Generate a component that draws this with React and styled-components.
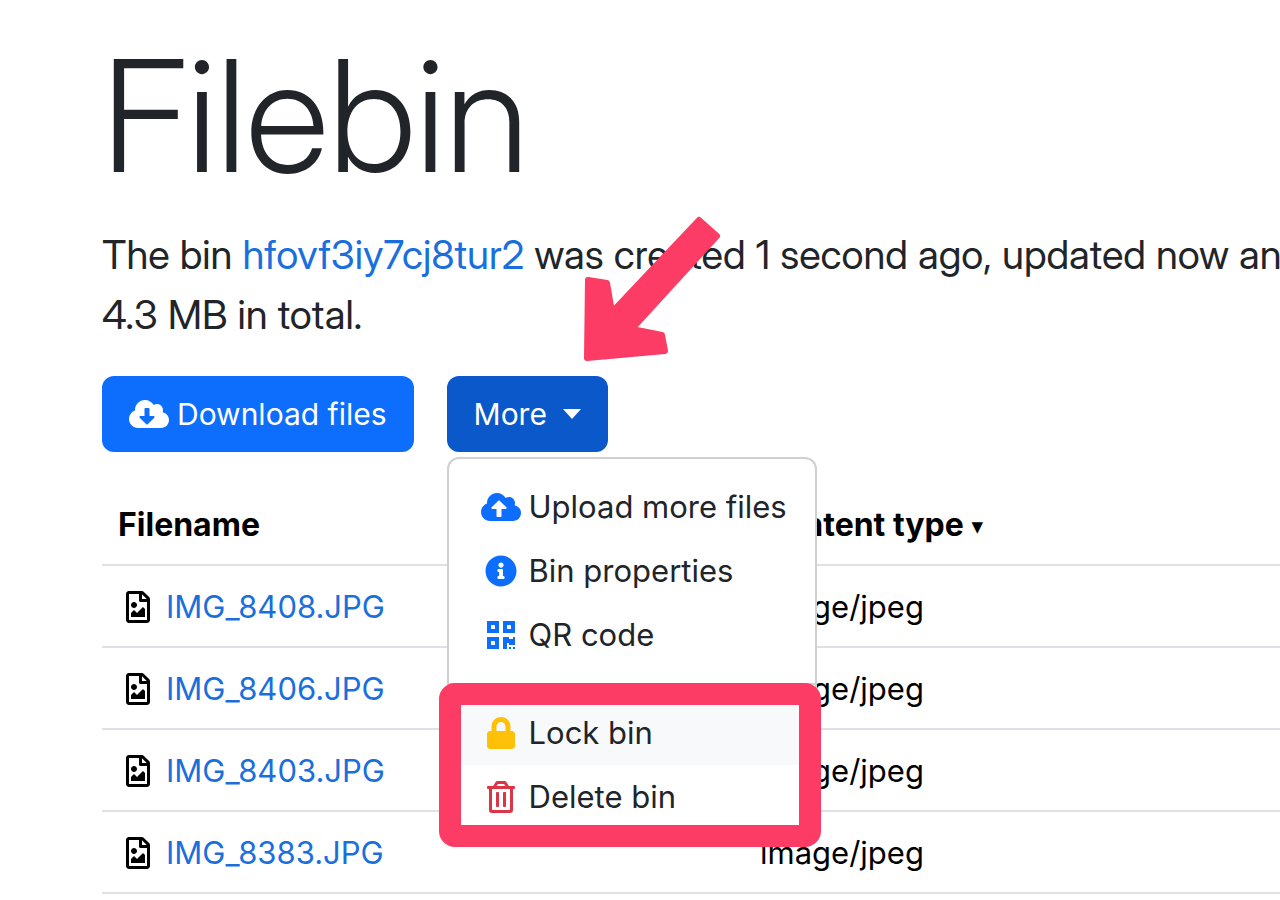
import styled, { createGlobalStyle, css } from "styled-components";
import {
  FaCloudDownloadAlt,
  FaCloudUploadAlt,
  FaInfoCircle,
  FaLock,
  FaQrcode,
  FaRegFileImage,
  FaRegTrashAlt,
} from "react-icons/fa";

const files = ["IMG_8408.JPG", "IMG_8406.JPG", "IMG_8403.JPG", "IMG_8383.JPG"];

const App = () => {
  return (
    <Page>
      <GlobalStyle />
      <Title>Filebin</Title>
      <Lead>
        The bin <Link href="#bin">hfovf3iy7cj8tur2</Link> was created 1 second
        ago, updated now and
        <br />
        4.3 MB in total.
      </Lead>
      <Toolbar>
        <Button type="button">
          <Icon as={FaCloudDownloadAlt} />
          Download files
        </Button>
        <Dropdown>
          <Button type="button" $open aria-haspopup="true" aria-expanded="true">
            More
            <Caret />
          </Button>
          <Arrow viewBox="0 0 140 148" aria-hidden="true">
            <path d="M5 142 L6 64 L25 67 L30 96 L117 4 L135 20 L50 113 L80 119 L83 135 Z" />
          </Arrow>
          <Menu>
            <MenuItem type="button">
              <Icon as={FaCloudUploadAlt} color="#0d6efd" />
              Upload more files
            </MenuItem>
            <MenuItem type="button">
              <Icon as={FaInfoCircle} color="#0d6efd" />
              Bin properties
            </MenuItem>
            <MenuItem type="button">
              <Icon as={FaQrcode} color="#0d6efd" />
              QR code
            </MenuItem>
            <Divider />
            <MenuItem type="button" $active>
              <Icon as={FaLock} color="#ffc107" />
              Lock bin
            </MenuItem>
            <MenuItem type="button">
              <Icon as={FaRegTrashAlt} color="#dc3545" />
              Delete bin
            </MenuItem>
            <Highlight />
          </Menu>
        </Dropdown>
      </Toolbar>
      <Table>
        <thead>
          <tr>
            <HeadCell $width="54.5%">Filename</HeadCell>
            <HeadCell>
              Content type <SortMark>▼</SortMark>
            </HeadCell>
          </tr>
        </thead>
        <tbody>
          {files.map((name) => (
            <tr key={name}>
              <Cell>
                <FileName>
                  <Icon as={FaRegFileImage} />
                  <Link href={`#${name}`}>{name}</Link>
                </FileName>
              </Cell>
              <Cell>image/jpeg</Cell>
            </tr>
          ))}
        </tbody>
      </Table>
    </Page>
  );
};

export default App;

const GlobalStyle = createGlobalStyle`
  * {
    box-sizing: border-box;
  }

  body {
    margin: 0;
    background: #fff;
    color: #212529;
    font-family: Inter, "Liberation Sans", sans-serif;
    font-size: 31px;
    line-height: 48px;
  }
`;

const Page = styled.main`
  padding: 20px 0 0 102px;
  overflow: hidden;
`;

const Title = styled.h1`
  margin: 0 0 13px;
  font-family: "Inter Display", Inter, sans-serif;
  font-size: 156px;
  font-weight: 300;
  line-height: 192px;
`;

const Lead = styled.p`
  margin: 0 0 31px;
  font-family: "Inter Display", Inter, sans-serif;
  font-size: 40px;
  font-weight: 400;
  line-height: 60px;
  white-space: nowrap;
`;

const Link = styled.a`
  color: #1a6fdc;
  text-decoration: none;
`;

const Toolbar = styled.div`
  display: flex;
  gap: 33px;
`;

const Icon = styled.svg`
  flex: none;
  width: 40px;
  height: 32px;
`;

const Button = styled.button`
  display: flex;
  align-items: center;
  gap: 8px;
  height: 76px;
  padding: 0 27px;
  border: 0;
  border-radius: 12px;
  background: ${({ $open }) => ($open ? "#0a58ca" : "#0d6efd")};
  color: #fff;
  font: inherit;
  font-size: 30px;
  white-space: nowrap;
`;

const Caret = styled.span`
  margin-left: 8px;
  border-top: 10px solid #fff;
  border-right: 9px solid transparent;
  border-left: 9px solid transparent;
`;

const Dropdown = styled.div`
  position: relative;
`;

const Arrow = styled.svg`
  position: absolute;
  top: -160px;
  left: 135px;
  width: 140px;
  height: 148px;
  z-index: 2;
  fill: #fc3c64;
  stroke: #fc3c64;
  stroke-width: 6px;
  stroke-linejoin: round;
`;

const Menu = styled.div`
  position: absolute;
  top: 81px;
  left: 0;
  z-index: 1;
  padding: 16px 0;
  border: 2px solid #d0d0d0;
  border-radius: 12px;
  background: #fff;
`;

const MenuItem = styled.button`
  display: flex;
  align-items: center;
  gap: 8px;
  width: 100%;
  height: 64px;
  padding: 0 28px 0 32px;
  border: 0;
  background: none;
  color: #212529;
  font: inherit;
  white-space: nowrap;
  ${({ $active }) =>
    $active &&
    css`
      background: #f8f9fa;
    `}
`;

const Divider = styled.hr`
  margin: 16px 0;
  border: 0;
  border-top: 2px solid #d0d0d0;
`;

const Highlight = styled.div`
  position: absolute;
  top: 224px;
  right: -6px;
  bottom: -2px;
  left: -10px;
  border: 22px solid #fc3c64;
  border-radius: 16px;
  pointer-events: none;
`;

const Table = styled.table`
  width: 100%;
  margin-top: 32px;
  border-collapse: collapse;
  color: #000;
  table-layout: fixed;
`;

const Cell = styled.td`
  padding: 17px 16px 15px;
  border-bottom: 2px solid #dee2e6;
`;

const HeadCell = styled(Cell).attrs({ as: "th", scope: "col" })`
  width: ${({ $width }) => $width || "auto"};
  font-size: 32px;
  font-weight: 700;
  text-align: left;
`;

const SortMark = styled.span`
  font-family: "DejaVu Sans", sans-serif;
  font-size: 15px;
  line-height: 1;
  vertical-align: middle;
`;

const FileName = styled.div`
  display: flex;
  align-items: center;
  gap: 8px;
`;
